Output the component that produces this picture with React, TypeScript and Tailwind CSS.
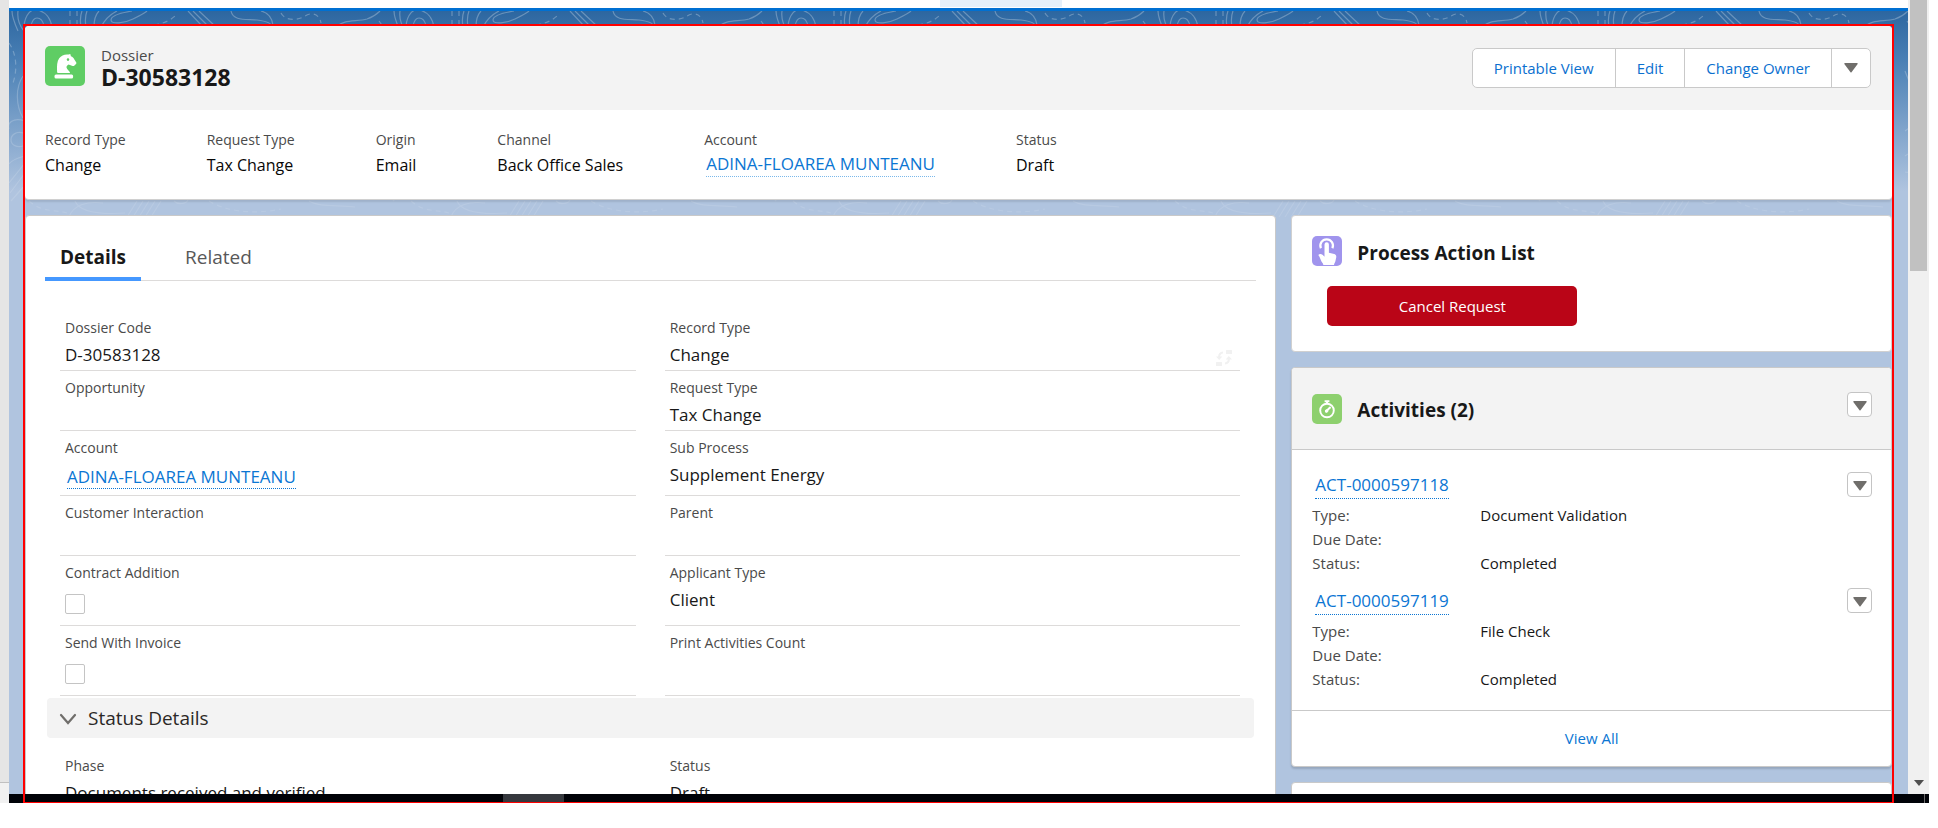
import { useState, type ReactNode } from "react";

type Field = { label: string; value?: string; kind?: "text" | "link" | "check"; action?: ReactNode };

const summary: Field[] = [
  { label: "Record Type", value: "Change" },
  { label: "Request Type", value: "Tax Change" },
  { label: "Origin", value: "Email" },
  { label: "Channel", value: "Back Office Sales" },
  { label: "Account", value: "ADINA-FLOAREA MUNTEANU", kind: "link" },
  { label: "Status", value: "Draft" },
];

const details: Field[] = [
  { label: "Dossier Code", value: "D-30583128" },
  { label: "Record Type", value: "Change", action: <ChangeTypeButton /> },
  { label: "Opportunity" },
  { label: "Request Type", value: "Tax Change" },
  { label: "Account", value: "ADINA-FLOAREA MUNTEANU", kind: "link" },
  { label: "Sub Process", value: "Supplement Energy" },
  { label: "Customer Interaction" },
  { label: "Parent" },
  { label: "Contract Addition", kind: "check" },
  { label: "Applicant Type", value: "Client" },
  { label: "Send With Invoice", kind: "check" },
  { label: "Print Activities Count" },
];

const statusDetails: Field[] = [
  { label: "Phase", value: "Documents received and verified" },
  { label: "Status", value: "Draft" },
];

const activities = [
  { id: "ACT-0000597118", type: "Document Validation", due: "", status: "Completed" },
  { id: "ACT-0000597119", type: "File Check", due: "", status: "Completed" },
];

function ChangeTypeButton() {
  return (
    <button type="button" aria-label="Change Record Type" className="mr-2 block pb-1 text-[#f1f1f1]">
      <svg viewBox="0 0 16 16" className="size-4" fill="currentColor">
        <rect x="10" y="0" width="6" height="4" rx="0.5" />
        <rect x="0" y="12" width="6" height="4" rx="0.5" />
        <path d="M7 1.5C3.8 1.8 2.2 3.6 2.1 6.4H0L3.2 10l3.1-3.6H4.2C4.300 4.700 5.200 3.800 7 3.500z" />
        <path d="M9 14.500c3.200-.3 4.800-2.100 4.900-4.900H16L12.800 6 9.700 9.600h2.100c-.1 1.700-1 2.600-2.800 2.900z" />
      </svg>
    </button>
  );
}

function Caret() {
  return (
    <svg viewBox="0 0 14 10" className="h-[10px] w-[14px]" fill="#706e6b">
      <path d="M1 0h12c.6 0 .9.700.5 1.200L7.500 9.300c-.3.400-.7.400-1 0L.5 1.200C.1.700.4 0 1 0z" />
    </svg>
  );
}

function MenuButton({ label }: { label: string }) {
  return (
    <button
      type="button"
      aria-label={label}
      className="flex size-[25px] items-center justify-center rounded border border-[#c4c4c4] bg-white pt-0.5"
    >
      <Caret />
    </button>
  );
}

function KnightIcon() {
  return (
    <svg viewBox="0 0 40 40" className="size-10 shrink-0 rounded-[5px] bg-[#5fcd64]" fill="#fff">
      <path
        fillRule="evenodd"
        d="M25.300 8L25.900 10.300C27.600 11 28.600 11.900 29.200 13.300L31.300 16.400Q31.700 17.300 31 18L29.200 19.800Q28.500 20.300 27.600 20L23.600 18.400C22.000 19.400 21.200 20.600 21.600 21.800C22.200 23.400 23.800 24.800 24.800 26Q25.400 27 24.500 27H13Q12.200 27 12.100 26C11.800 20 12 15.200 14.200 12.200C16 9.700 18.800 8.400 22 8.400L23.500 8.600zM23 12.300a1.300 1.300 0 1 0 0 2.600 1.300 1.300 0 0 0 0-2.600z"
      />
      <rect x="9.500" y="28.500" width="18.600" height="4" rx="1.500" />
    </svg>
  );
}

function TouchIcon() {
  return (
    <svg viewBox="0 0 30 30" className="size-[30px] shrink-0 rounded-[5px] bg-[#a094ed]">
      <path d="M8.900 12.200A6.300 6.300 0 1 1 20.400 12.200" fill="none" stroke="#fff" strokeWidth="2.200" />
      <path
        fill="#fff"
        d="M12.500 8.500a2.200 2.200 0 0 1 4.400 0v8.200l5.300 1.400c1.400.4 2.200 1.400 2.100 2.900l-.8 3.800c-.4 1.700-1 2.700-1.400 3.300v1H11.200v-1c-1.300-1.700-2.300-3.500-3-5.600-.5-1.500-1.200-2.800-1.900-3.500.9-1.300 2.800-1.500 4.200-.2l2 2z"
      />
    </svg>
  );
}

function StopwatchIcon() {
  return (
    <svg viewBox="0 0 30 30" className="size-[30px] shrink-0 rounded-[5px] bg-[#8dd06e]" fill="none" stroke="#fff">
      <circle cx="15" cy="16.500" r="6.800" strokeWidth="1.900" />
      <path d="M12.600 7.200h4.800M15 7v3" strokeWidth="2" />
      <path d="M14 17.500l4-4" strokeWidth="1.900" strokeLinecap="round" />
      <circle cx="14.600" cy="17" r="1.300" fill="#fff" strokeWidth="1" />
    </svg>
  );
}

function ContourBackdrop() {
  return (
    <svg className="absolute inset-x-0 top-0 h-52 w-full" aria-hidden="true">
      <defs>
        <pattern id="contours" width="382" height="208" patternUnits="userSpaceOnUse">
          <g fill="none" stroke="#fff" strokeWidth="1.200">
            <path d="M3 0c0 6 2 11 6 20M9 0c-1 8 1 14 6 20M15 15C16 4 22-3 29-1s13 8 14 18M22 15c1-5 3-8 6-8s6 3 7 8" />
            <path d="M73 0c-2 5-2 10-1 16M78 0c-2 5-2 10-1 16M90 0c-4 4-5 10-5 16" />
            <path d="M123 0c-12 2-21 5-21 9 0 5 14 3 22-1 6-3 12-6 14-8M92 16c4-8 10-13 16-16" />
            <path d="M179 0l15 16M184 0l16 16M190 0l17 16M222 0c2 10 14 8 26 9 8 1 15 3 15 7M252 0c8 2 11 7 12 14M328 16c6-8 20-5 30-8 6-2 10-5 13-8" />
            <path d="M14 65c-8 12-7 30 0 42M16 110c-12-4-18 2-16 8M14 122c-7-2-12 2-12 7s6 8 12 6M16 145c-8 2-14 5-16 8M16 152L0 172M16 162L1 182M16 174L2 190" />
            <path d="M370 10c8 10 10 20 4 28M368 60c6 16 16 34 9 50-2 6-6 8-9 10M368 145c6-5 12-2 12 4s-5 14-12 12" />
            <path d="M60 206c4-12 18-16 34-14M66 190c4 10 20 14 50 12M118 206l10-16M124 206l10-16M130 206l10-16M136 206l10-16M142 206l10-16M165 190c4 4 12 3 14-1M300 190c10 6 26 4 46 6" />
            <g strokeDasharray="5 4">
              <path d="M61 0v16M68 0v16M145 14c8-1 16-4 22-10M272 2c4 8 16 8 24 3 6-4 14-3 16 7M0 32c7 10 9 25 4 40M20 190c14 12 24 8 38 12M200 190c16 10 44 14 72 8M376 70c-6 8-4 16 2 22" />
            </g>
          </g>
        </pattern>
        <linearGradient id="fade" x1="0" y1="0" x2="0" y2="1">
          <stop offset="0" stopColor="#fff" stopOpacity="0.28" />
          <stop offset="1" stopColor="#fff" stopOpacity="0.1" />
        </linearGradient>
        <mask id="contourFade">
          <rect width="100%" height="100%" fill="url(#fade)" />
        </mask>
      </defs>
      <rect width="100%" height="100%" fill="url(#contours)" mask="url(#contourFade)" />
    </svg>
  );
}

function RecordLink({ children, soft = false }: { children: ReactNode; soft?: boolean }) {
  return (
    <a
      href="#record"
      className={
        "ml-0.5 inline-block border-b border-dotted text-[17px] leading-[22px] text-[#0b76d3] " +
        (soft ? "border-[#7ab8ea]" : "border-[#0b76d3]")
      }
    >
      {children}
    </a>
  );
}

function FieldCell({ field }: { field: Field }) {
  const id = field.label.toLowerCase().replace(/ /g, "-");
  if (field.kind === "check") {
    return (
      <div className="border-b border-[#dddbda] px-[5px] pb-[11px] pt-[7px]">
        <label htmlFor={id} className="block text-sm leading-5 text-[#4a4a4a]">
          {field.label}
        </label>
        <input
          id={id}
          type="checkbox"
          className="mt-[11px] block size-5 appearance-none rounded-[2px] border border-[#c4c4c4] bg-white"
        />
      </div>
    );
  }
  return (
    <div className="flex justify-between border-b border-[#dddbda] pl-[5px] pt-[7px]">
      <dl>
        <dt className="text-sm leading-5 text-[#4a4a4a]">{field.label}</dt>
        {field.kind === "link" ? (
          <dd className="flex pb-1.5 pt-2">
            <RecordLink>{field.value}</RecordLink>
          </dd>
        ) : (
          <dd className="min-h-8 pb-[3px] pt-[5px] text-[17px] leading-6 text-[#181818]">{field.value}</dd>
        )}
      </dl>
      {field.action && <div className="self-end">{field.action}</div>}
    </div>
  );
}

function RecordHeader() {
  return (
    <header className="relative overflow-hidden rounded border-b border-[#d0d0d0] bg-white shadow-[0_2px_2px_rgba(0,0,0,0.1)]">
      <div className="flex items-start justify-between bg-[#f3f3f3] px-5 pb-5 pt-5">
        <div className="flex gap-4">
          <KnightIcon />
          <div>
            <p className="text-[15px] leading-[18px] text-[#4a4a4a]">Dossier</p>
            <h1 className="text-[23px] font-bold leading-[26px] text-[#181818]">D-30583128</h1>
          </div>
        </div>
        <div className="mr-px mt-0.5 flex h-10 divide-x divide-[#c9c9c9] rounded-[5px] border border-[#c9c9c9] bg-white text-[15px] text-[#0b70cf]">
          <button type="button" className="px-[21px]">Printable View</button>
          <button type="button" className="px-[21px]">Edit</button>
          <button type="button" className="px-[21px]">Change Owner</button>
          <button type="button" aria-label="Show more actions" className="px-3">
            <Caret />
          </button>
        </div>
      </div>
      <dl className="flex gap-[81px] px-5 pb-[22px] pt-5">
        {summary.map((f) => (
          <div key={f.label}>
            <dt className="text-sm leading-5 text-[#4a4a4a]">{f.label}</dt>
            <dd className="mt-[3px] flex h-6 text-base leading-6 text-[#080707]">
              {f.kind === "link" ? <RecordLink soft>{f.value}</RecordLink> : f.value}
            </dd>
          </div>
        ))}
      </dl>
    </header>
  );
}

function DetailsCard() {
  const [open, setOpen] = useState(true);
  return (
    <section className="rounded border border-[#c9c9c9] bg-white px-[19px] pb-6 pt-4">
      <div role="tablist" className="flex gap-[29px] border-b border-[#dddbda] text-[19px]">
        <button
          type="button"
          role="tab"
          aria-selected="true"
          className="-mb-px h-[49px] border-b-4 border-[#4598ff] px-[15px] pt-[5px] font-bold text-[#181818]"
        >
          Details
        </button>
        <button
          type="button"
          role="tab"
          aria-selected="false"
          className="-mb-px h-[49px] border-b-4 border-transparent px-[15px] pt-[5px] text-[#585858]"
        >
          Related
        </button>
      </div>
      <div className="mt-[30px] grid grid-cols-2 gap-x-[29px] pl-[15px] pr-4">
        {details.map((f) => (
          <FieldCell key={f.label} field={f} />
        ))}
      </div>
      <h2 className="mx-0.5 mt-0.5">
        <button
          type="button"
          aria-expanded={open}
          onClick={() => setOpen(!open)}
          className="flex h-10 w-full items-center gap-[11px] rounded bg-[#f3f3f3] px-3 pt-px text-[19px] text-[#2b2826]"
        >
          <svg viewBox="0 0 18 12" className="h-3 w-[18px]" fill="none" stroke="#706e6b" strokeWidth="2.200" strokeLinecap="round">
            <path d="M2 2l7 8 7-8" />
          </svg>
          Status Details
        </button>
      </h2>
      {open && (
        <div className="mt-[11px] grid grid-cols-2 gap-x-[29px] pl-[15px] pr-4">
          {statusDetails.map((f) => (
            <FieldCell key={f.label} field={f} />
          ))}
        </div>
      )}
    </section>
  );
}

function ProcessCard() {
  return (
    <section className="rounded border border-[#d0d0d0] bg-white px-5 pb-[25px] pt-5">
      <div className="flex gap-[15px]">
        <TouchIcon />
        <h2 className="pt-1 text-[19px] font-bold leading-[26px] text-[#181818]">Process Action List</h2>
      </div>
      <button
        type="button"
        className="ml-[15px] mt-5 h-10 w-[250px] rounded-[5px] bg-[#ba0517] text-[15px] text-white"
      >
        Cancel Request
      </button>
    </section>
  );
}

function ActivitiesCard() {
  return (
    <section className="overflow-hidden rounded border border-[#c9c9c9] bg-white shadow-[0_2px_2px_rgba(0,0,0,0.15)]">
      <div className="flex items-start gap-[15px] border-b border-[#c9c9c9] bg-[#f3f3f3] pb-[25px] pl-5 pr-[19px] pt-6">
        <div className="pt-0.5">
          <StopwatchIcon />
        </div>
        <h2 className="grow pb-px pt-[5px] text-[19px] font-bold leading-[26px] text-[#181818]">Activities (2)</h2>
        <MenuButton label="Activities menu" />
      </div>
      <ul className="flex flex-col gap-3 pb-[18px] pl-5 pr-[19px] pt-[22px]">
        {activities.map((a) => (
          <li key={a.id} className="flex items-start justify-between">
            <div className="flex flex-col items-start">
              <a
                href="#activity"
                className="ml-[3px] border-b border-dotted border-[#0b76d3] text-[17px] leading-[26px] text-[#0b76d3]"
              >
                {a.id}
              </a>
              <dl className="mt-1 grid grid-cols-[168px_auto] pb-px text-[15px] leading-6">
                <dt className="text-[#4a4a4a]">Type:</dt>
                <dd className="text-[#181818]">{a.type}</dd>
                <dt className="text-[#4a4a4a]">Due Date:</dt>
                <dd className="text-[#181818]">{a.due}</dd>
                <dt className="text-[#4a4a4a]">Status:</dt>
                <dd className="text-[#181818]">{a.status}</dd>
              </dl>
            </div>
            <MenuButton label={"Actions for " + a.id} />
          </li>
        ))}
      </ul>
      <a
        href="#activities"
        className="flex h-14 items-center justify-center border-t border-[#c9c9c9] text-[15px] text-[#0b76d3]"
      >
        View All
      </a>
    </section>
  );
}

function Scrollbar() {
  return (
    <div className="flex w-[21px] shrink-0 flex-col justify-between bg-[#f0f0f0] px-0.5 pb-2">
      <div className="h-[271px] bg-[#c1c1c1]" />
      <svg viewBox="0 0 10 6" className="mx-auto h-1.5 w-2.5" fill="#505050">
        <path d="M0 0h10L5 6z" />
      </svg>
    </div>
  );
}

export default function App() {
  return (
    <div className="flex h-screen bg-white pb-[25px] pr-[9px] font-['Open_Sans','Noto_Sans',sans-serif]">
      <aside className="flex w-[9px] shrink-0 flex-col bg-[#e5e5e5]">
        <div className="grow" />
        <div className="h-[21px] border-t border-[#c0c0c0] bg-[#f1f1f1]" />
      </aside>
      <div className="relative flex min-w-0 grow flex-col">
        <div className="flex min-h-0 grow">
          <div className="flex min-w-0 grow flex-col">
            <div className="box-content h-2 shrink-0 border-b-[3px] border-[#0070d2] bg-white">
              <div className="ml-[49%] h-[7px] w-[122px] bg-[#e5f0fa]" />
            </div>
            <main className="relative min-h-0 grow overflow-hidden bg-[#b0c4df] bg-[linear-gradient(to_bottom,#2d67a0_0,#4a80b5_50px,#b0c4df_180px)] bg-no-repeat px-4 pt-[15px]">
              <ContourBackdrop />
              <div className="relative flex flex-col gap-[15px]">
                <RecordHeader />
                <div className="grid grid-cols-[minmax(0,25fr)_minmax(0,12fr)] items-start gap-[15px]">
                  <DetailsCard />
                  <div className="flex flex-col gap-[15px]">
                    <ProcessCard />
                    <ActivitiesCard />
                    <section className="h-40 rounded border border-[#c9c9c9] bg-white" />
                  </div>
                </div>
              </div>
            </main>
          </div>
          <Scrollbar />
        </div>
        <footer className="flex h-[9px] shrink-0 bg-[#000207]">
          <div className="ml-[494px] w-[61px] bg-[#35383d]" />
          <div className="ml-auto mr-1 w-px bg-[#6b6b6b]" />
        </footer>
        <div className="pointer-events-none absolute bottom-0 left-[14px] right-[35px] top-6 border-2 border-b border-[#ff0000]" />
      </div>
    </div>
  );
}
